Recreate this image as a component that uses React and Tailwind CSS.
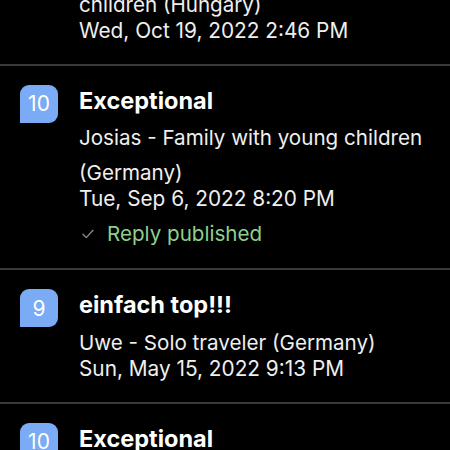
const REVIEWS = [
  {
    score: 10,
    title: 'Exceptional',
    name: ['Zsófia - Family with young', 'children (Hungary)'],
    date: 'Wed, Oct 19, 2022 2:46 PM',
  },
  {
    score: 10,
    title: 'Exceptional',
    name: ['Josias - Family with young children', '(Germany)'],
    date: 'Tue, Sep 6, 2022 8:20 PM',
    replied: true,
  },
  {
    score: 9,
    title: 'einfach top!!!',
    name: ['Uwe - Solo traveler (Germany)'],
    date: 'Sun, May 15, 2022 9:13 PM',
  },
  {
    score: 10,
    title: 'Exceptional',
    name: ['Anna - Couple (Austria)'],
    date: 'Sat, Apr 30, 2022 6:02 PM',
  },
]

function Badge({ score }) {
  return (
    <div className="w-[38px] h-[38px] shrink-0 rounded-[9px] rounded-bl-none bg-[#7aabf4] flex items-center justify-center text-white text-[21px] leading-none">
      {score}
    </div>
  )
}

function Row({ r }) {
  return (
    <div className="flex gap-[21px] pl-5 pr-4 pt-[19px] pb-6">
      <Badge score={r.score} />
      <div className="flex flex-col min-w-0">
        <p className="text-white font-bold text-[23.5px] leading-[32px]">{r.title}</p>
        <div className="mt-[3.5px] text-[#efefef] text-[20.6px] leading-[35px] whitespace-nowrap">
          {r.name.map(l => <p key={l}>{l}</p>)}
        </div>
        <p className="text-[#efefef] text-[20.8px] leading-[18px] whitespace-nowrap">{r.date}</p>

        {/* respuesta publicada */}
        {r.replied && (
          <div className="flex items-center mt-4 h-5">
            <svg width="12" height="10" viewBox="0 0 12 10" className="ml-[3px]">
              <path d="M1 5.2 L4.3 8.6 L11 1.2" fill="none" stroke="#8d8d8d" strokeWidth="1.3" strokeLinecap="round" strokeLinejoin="round" />
            </svg>
            <span className="ml-[13px] text-[#8ecf8e] text-[20.6px] leading-[20px]">Reply published</span>
          </div>
        )}
      </div>
    </div>
  )
}

export default function App() {
  return (
    <div className="w-[450px] h-[450px] overflow-hidden bg-black" style={{ fontFamily: 'Inter, "Noto Sans", sans-serif' }}>
      <div className="-mt-[103px]">
        {REVIEWS.map((r, i) => (
          <div key={i}>
            {i > 0 && <div className="h-[2px] bg-[#3a3a3a]" />}
            <Row r={r} />
          </div>
        ))}
      </div>
    </div>
  )
}
